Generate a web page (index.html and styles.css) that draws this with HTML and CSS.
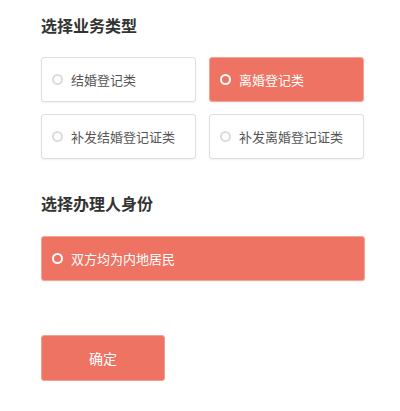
FILE: index.html
```html
<!DOCTYPE html>
<html lang="zh-CN">
<head>
<meta charset="utf-8">
<link rel="stylesheet" href="styles.css">
</head>
<body>
<div class="page">
  <h2 class="title">选择业务类型</h2>
  <div class="grid">
    <div class="opt"><span class="radio"></span><span>结婚登记类</span></div>
    <div class="opt active"><span class="radio"></span><span>离婚登记类</span></div>
    <div class="opt"><span class="radio"></span><span>补发结婚登记证类</span></div>
    <div class="opt"><span class="radio"></span><span>补发离婚登记证类</span></div>
  </div>
  <h2 class="title title2">选择办理人身份</h2>
  <div class="opt active wide"><span class="radio"></span><span>双方均为内地居民</span></div>
  <button class="btn">确定</button>
</div>
</body>
</html>
```

FILE: styles.css
```css
html, body {
  margin: 0;
  padding: 0;
  background: #fff;
  font-family: "Noto Sans CJK SC", "Noto Sans", sans-serif;
}
.page {
  padding: 13px 36px 0 41px;
}
.title {
  margin: 0;
  font-size: 16px;
  line-height: 24px;
  font-weight: bold;
  color: #333;
}
.grid {
  margin-top: 20px;
  display: grid;
  grid-template-columns: 155px 155px;
  column-gap: 13px;
  row-gap: 12px;
}
.opt {
  box-sizing: border-box;
  height: 45px;
  display: flex;
  align-items: center;
  padding-left: 10px;
  gap: 8px;
  border: 1px solid #e2dcdc;
  border-radius: 3px;
  background: #fff;
  box-shadow: 0 1px 2px rgba(0,0,0,0.06);
  font-size: 13px;
  color: #555;
}
.radio {
  box-sizing: border-box;
  width: 11px;
  height: 11px;
  border-radius: 50%;
  border: 2px solid #dcdcdc;
  flex: none;
}
.opt.active {
  background: #ef7362;
  border-color: #f3a597;
  color: #fff;
}
.opt.active .radio {
  border: 2.5px solid #fff;
}
.title2 {
  margin-top: 32px;
}
.wide {
  margin-top: 21px;
  width: 324px;
  height: 45px;
}
.btn {
  display: block;
  margin-top: 54px;
  width: 124px;
  height: 46px;
  border: 1px solid #f2a090;
  border-radius: 3px;
  background: #ef7362;
  color: #fff;
  font-family: inherit;
  font-size: 14px;
  padding: 0;
}
```
